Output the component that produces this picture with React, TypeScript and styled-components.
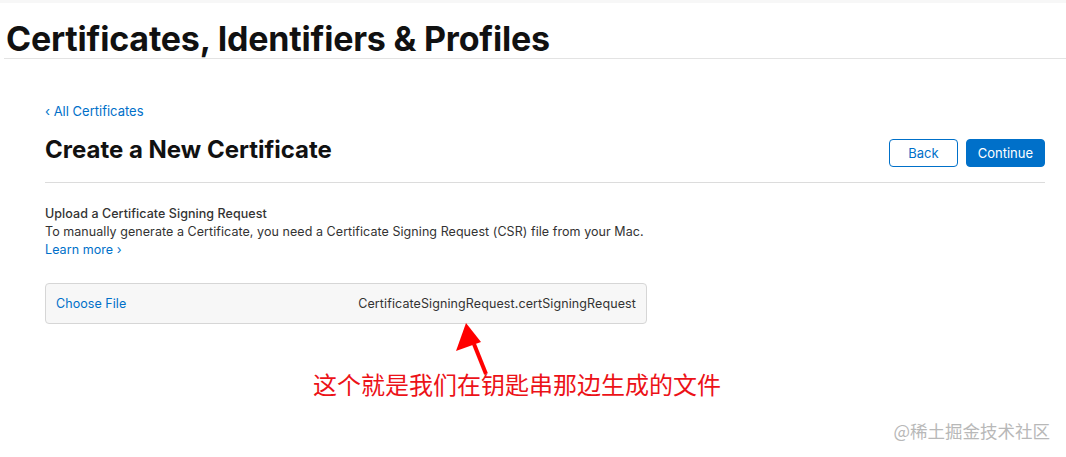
import styled, { createGlobalStyle } from "styled-components";

const GlobalStyle = createGlobalStyle`
  html, body {
    margin: 0;
    padding: 0;
    background: #ffffff;
  }
  body {
    font-family: Inter, "Noto Sans", "Noto Sans CJK SC", sans-serif;
    color: #111111;
  }
`;

const Page = styled.div`
  position: relative;
  width: 1066px;
  height: 457px;
  overflow: hidden;
  background: #ffffff;
`;

const TopStrip = styled.div`
  height: 3px;
  background: #f7f7f7;
`;

const PageHeader = styled.header`
  margin-left: 4px;
  padding: 17px 0 0 2px;
  border-bottom: 1px solid #e3e3e3;
`;

const PageTitle = styled.h1`
  margin: 0;
  font-size: 34px;
  line-height: 38px;
  font-weight: 700;
  letter-spacing: -0.2px;
  color: #111111;
`;

const Main = styled.main`
  width: 1000px;
  margin-left: 45px;
  padding-top: 43px;
`;

const CrumbLink = styled.a`
  display: block;
  width: fit-content;
  font-size: 13px;
  line-height: 18px;
  color: #0070c9;
  text-decoration: none;
`;

const TitleRow = styled.div`
  display: flex;
  align-items: flex-start;
  justify-content: space-between;
  margin-top: 15px;
  padding-bottom: 15px;
  border-bottom: 1px solid #dcdcdc;
`;

const SectionTitle = styled.h2`
  margin: 0;
  font-size: 24px;
  line-height: 30px;
  font-weight: 700;
  color: #111111;
`;

const ButtonGroup = styled.div`
  display: flex;
  gap: 8px;
  margin-top: 4px;
`;

const Button = styled.button<{ $primary?: boolean }>`
  box-sizing: border-box;
  height: 28px;
  padding: 0 ${(p) => (p.$primary ? "11px" : "18px")};
  border-radius: 4px;
  border: 1px solid #0070c9;
  background: ${(p) => (p.$primary ? "#0070c9" : "#ffffff")};
  color: ${(p) => (p.$primary ? "#ffffff" : "#0070c9")};
  font-family: inherit;
  font-size: 13px;
  cursor: pointer;
`;

const Upload = styled.section`
  padding-top: 22px;
  font-size: 12.5px;
  line-height: 18px;
  letter-spacing: 0.06px;
`;

const UploadHeading = styled.div`
  font-weight: 500;
  color: #333333;
`;

const UploadText = styled.p`
  margin: 0;
  color: #333333;
`;

const LearnMore = styled.a`
  display: block;
  width: fit-content;
  color: #0070c9;
  text-decoration: none;
`;

const FileBox = styled.div`
  display: flex;
  align-items: center;
  justify-content: space-between;
  box-sizing: border-box;
  width: 602px;
  height: 41px;
  margin-top: 24px;
  padding: 0 10px;
  background: #f7f7f7;
  border: 1px solid #d6d6d6;
  border-radius: 4px;
`;

const ChooseFile = styled.span`
  color: #0070c9;
`;

const FileName = styled.span`
  color: #333333;
  letter-spacing: 0.1px;
`;

const Arrow = styled.svg`
  position: absolute;
  left: 450px;
  top: 320px;
`;

const Note = styled.div`
  position: absolute;
  left: 313px;
  top: 368px;
  font-family: "Noto Sans CJK SC", sans-serif;
  font-size: 24px;
  line-height: 32px;
  color: #ec1218;
`;

const Watermark = styled.div`
  position: absolute;
  right: 16px;
  top: 419px;
  font-family: "Noto Sans CJK SC", sans-serif;
  font-size: 17.5px;
  line-height: 24px;
  color: #b8b8b8;
`;

export default function App() {
  return (
    <Page>
      <GlobalStyle />
      <TopStrip />
      <PageHeader>
        <PageTitle>Certificates, Identifiers &amp; Profiles</PageTitle>
      </PageHeader>
      <Main>
        <CrumbLink href="#">‹ All Certificates</CrumbLink>
        <TitleRow>
          <SectionTitle>Create a New Certificate</SectionTitle>
          <ButtonGroup>
            <Button>Back</Button>
            <Button $primary>Continue</Button>
          </ButtonGroup>
        </TitleRow>
        <Upload>
          <UploadHeading>Upload a Certificate Signing Request</UploadHeading>
          <UploadText>
            To manually generate a Certificate, you need a Certificate Signing Request (CSR) file from your Mac.
          </UploadText>
          <LearnMore href="#">Learn more ›</LearnMore>
          <FileBox>
            <ChooseFile>Choose File</ChooseFile>
            <FileName>CertificateSigningRequest.certSigningRequest</FileName>
          </FileBox>
        </Upload>
      </Main>
      <Arrow width="50" height="60" viewBox="0 0 50 60">
        <line x1="36" y1="54" x2="24" y2="24" stroke="#ff0000" strokeWidth="4" />
        <polygon points="16,3 6,31 31,22" fill="#ff0000" />
      </Arrow>
      <Note>这个就是我们在钥匙串那边生成的文件</Note>
      <Watermark>@稀土掘金技术社区</Watermark>
    </Page>
  );
}
